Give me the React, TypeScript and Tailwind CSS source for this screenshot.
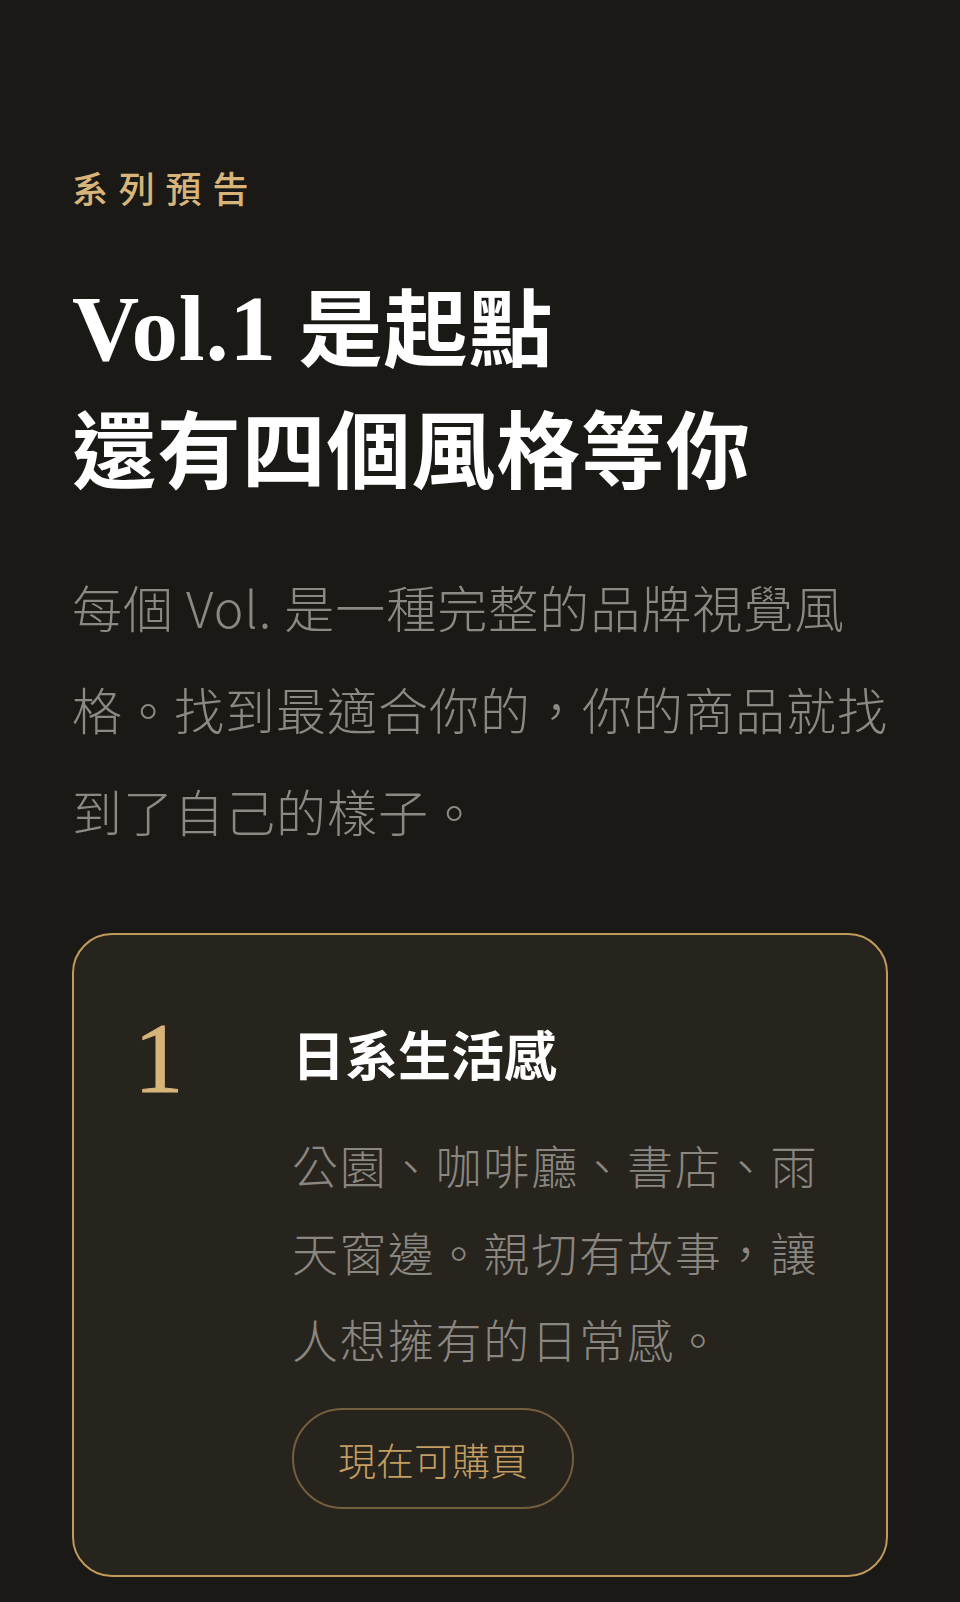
import React from "react";

const sans = "font-['Noto_Sans_CJK_TC','Noto_Sans',sans-serif]";

export default function App() {
  return (
    <div className={`min-h-screen bg-[#1b1916] ${sans}`}>
      <div className="px-[72px] pt-[160px] pb-[80px]">
        <p className="text-[36px] leading-[54px] tracking-[0.3em] font-medium text-[#d6b47a]">系列預告</p>

        <h2 className="mt-[54px] text-[84px] leading-[122px] font-bold text-white font-['Liberation_Serif','Noto_Sans_CJK_TC',serif] tracking-[0.01em]">
          <span className="text-[93px]">Vol.1</span> 是起點
          <br />
          還有四個風格等你
        </h2>

        <p className="mt-[40px] text-[50px] leading-[102px] font-light text-[#8c8984] tracking-[0.02em]">
          每個 Vol. 是一種完整的品牌視覺風格。找到最適合你的，你的商品就找到了自己的樣子。
        </p>

        <div className="mt-[72px] rounded-[40px] border-[2.5px] border-[#c09b5c] bg-[#27231d] pl-[60px] pr-[66px] pt-[79px] pb-[66px] flex">
          <div className="w-[158px] shrink-0 font-['Liberation_Serif',serif] text-[99px] leading-[90px] text-[#d6b47a] [-webkit-text-stroke:1px_#d6b47a]">1</div>
          <div className="flex-1 min-w-0">
            <h3 className="text-[53px] leading-[78px] font-bold text-white">日系生活感</h3>
            <p className="mt-[29px] text-[46px] leading-[87px] font-light text-[#8a8781] tracking-[0.04em]">
              公園、咖啡廳、書店、雨天窗邊。親切有故事，讓人想擁有的日常感。
            </p>
            <button className="mt-[26px] rounded-full border-2 border-[#735f3e] px-[44px] py-[20px] text-[38px] leading-[57px] font-light text-[#c29e62]">
              現在可購買
            </button>
          </div>
        </div>
      </div>
    </div>
  );
}
